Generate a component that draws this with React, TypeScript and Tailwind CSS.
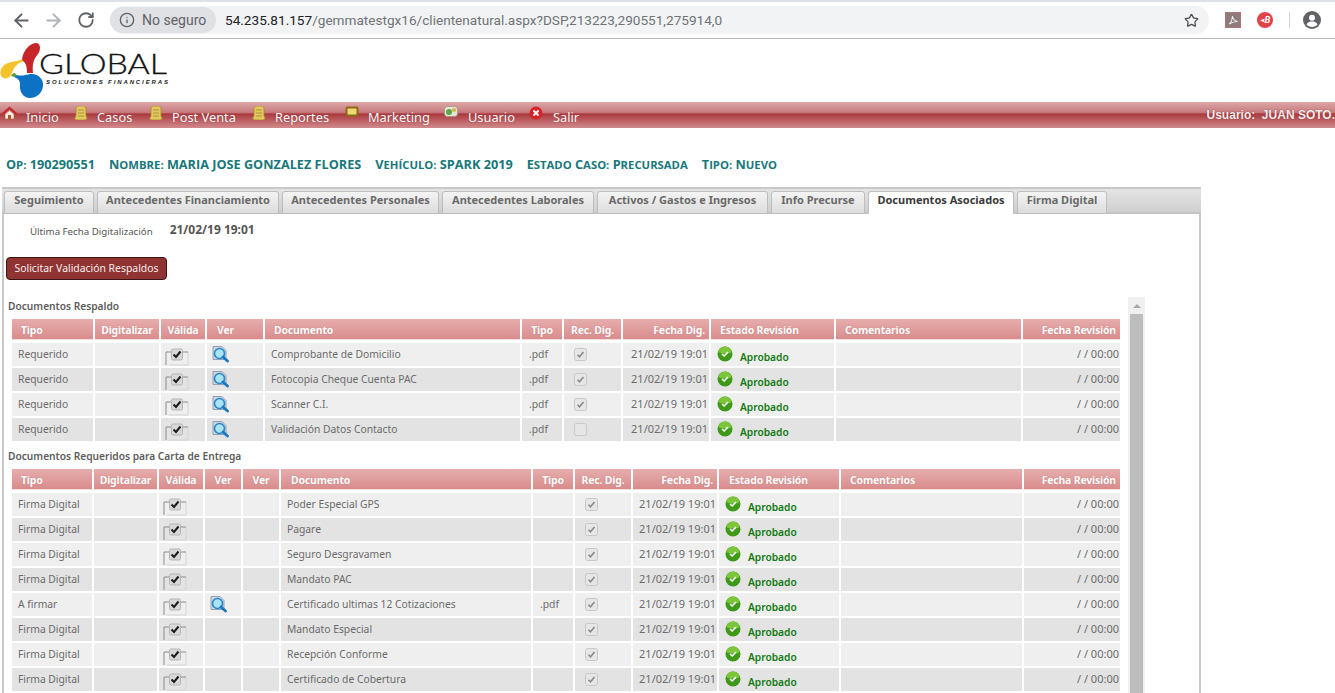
import React from 'react';
import { ArrowLeft, ArrowRight, RotateCw, Info, Star } from 'lucide-react';

const bodyFont = "font-['Noto_Sans','Open_Sans',sans-serif]";

const LogoMark = () => (
  <svg width="170" height="62" viewBox="0 39 170 62" className="block">
    <path d="M25 57L25 60C18 61 14 66 12 72C10 78 4 79 1 75C-1 70 2 64 8 62C14 60 20 60 25 57z" fill="#f4c32c" />
    <path d="M36 42C41 42 41 49 38 53C34 58 32 62 33 72L27 72C27 66 26 62 23 60C20 57 27 42 36 42z" fill="#c6262a" />
    <path d="M14 73C20 76 26 74 30 73C38 72 44 78 43 85C42 93 36 97 30 97C23 97 19 90 20 83C20 79 17 77 14 76z" fill="#0d71c4" />
    <path d="M11 75c1-2 2-3 4-3l2 3c-2 1-4 1-6 0z" fill="#5a9e3c" />
    <text x="39" y="73" textLength="128" lengthAdjust="spacingAndGlyphs" fontFamily="Lato, sans-serif" fontWeight="300" fontSize="27" fill="#111" stroke="#111" strokeWidth="0.3">GLOBAL</text>
    <text x="46" y="83" textLength="122" fontFamily="Liberation Sans, sans-serif" fontWeight="700" fontStyle="italic" fontSize="6" fill="#222">SOLUCIONES  FINANCIERAS</text>
  </svg>
);

const NoteIcon = () => (
  <svg width="14" height="14" viewBox="0 0 14 14">
    <path d="M2 3c0-2 1-3 3-3h5c1 0 2 1 2 3v7l1 2c0 1-1 2-2 2H3c-1 0-3-1-2-2l1-2z" fill="#e2c765" stroke="#a8891f" strokeWidth="0.8" />
    <path d="M4 4h6M4 7h6M4 10h6" stroke="#a8891f" strokeWidth="0.8" />
  </svg>
);

const HomeIcon = () => (
  <svg width="15" height="14" viewBox="0 0 15 14">
    <path d="M7.5 0.5 15 7l-1.5 1.5L7.5 3.5 1.5 8.5 0 7z" fill="#c8282a" />
    <path d="M3 8l4.500-3.500L12 8v5H3z" fill="#f6ece2" stroke="#9a5a3a" strokeWidth="0.6" />
    <rect x="6" y="9" width="3" height="4" fill="#b5552f" />
  </svg>
);

const MailIcon = () => (
  <svg width="14" height="12" viewBox="0 0 14 12">
    <rect x="0.500" y="0.500" width="13" height="10" rx="2" fill="#8f6a12" />
    <rect x="2.500" y="2.500" width="9" height="6" rx="1" fill="#f0d878" />
  </svg>
);

const UserMenuIcon = () => (
  <svg width="14" height="13" viewBox="0 0 14 13">
    <rect x="0.500" y="0.500" width="13" height="10" rx="3" fill="#e6e6d8" stroke="#9a9a80" strokeWidth="0.8" />
    <circle cx="5" cy="6" r="3" fill="#5aa845" />
    <circle cx="10" cy="4" r="2" fill="#d9b24a" />
  </svg>
);

const ExitIcon = () => (
  <svg width="14" height="14" viewBox="0 0 14 14">
    <circle cx="7" cy="7" r="6.500" fill="#d3242a" />
    <path d="M4.500 4.500l5 5M9.500 4.500l-5 5" stroke="#fff" strokeWidth="1.800" />
  </svg>
);

const ValidaBox = () => (
  <svg width="24" height="18" viewBox="0 0 24 18" className="block">
    <path d="M23 4v13H4" fill="none" stroke="#d4d4d4" strokeWidth="1" />
    <path d="M1 17V4h5M18 4h5" fill="none" stroke="#8c8c8c" strokeWidth="1" />
    <rect x="6.500" y="1" width="11" height="11" rx="1.500" fill="#d8d8d8" stroke="#b5b5b5" />
    <path d="M8.500 6.500l2.500 2.500 4.500-5.500" fill="none" stroke="#1c1c1c" strokeWidth="2" />
  </svg>
);

const Lupa = () => (
  <svg width="17" height="17" viewBox="0 0 17 17" className="block">
    <path d="M1 0.500h9l4 4v9H1z" fill="#ccd5df" stroke="#7f93a8" strokeWidth="0.8" />
    <circle cx="7.500" cy="7.500" r="5" fill="#a8e4f5" stroke="#2a86c8" strokeWidth="1.600" />
    <path d="M11 11l4.500 4" stroke="#1a78c0" strokeWidth="2.800" strokeLinecap="round" />
  </svg>
);

const RecBox = ({ checked }: { checked: boolean }) => (
  <svg width="13" height="13" viewBox="0 0 13 13" className="block">
    <rect x="0.500" y="0.500" width="12" height="12" rx="2" fill="#e6e6e6" stroke="#c8c8c8" />
    {checked && <path d="M3.500 6.800l2 2 4-4.800" fill="none" stroke="#8a8a8a" strokeWidth="1.600" />}
  </svg>
);

const OkIcon = () => (
  <svg width="16" height="16" viewBox="0 0 16 16" className="block">
    <circle cx="8" cy="8" r="7.500" fill="#3f9a1a" />
    <path d="M1.500 6a6.500 5.500 0 0 1 13 0c-2 2-11 2-13 0z" fill="#7cc63a" />
    <path d="M5 8l2.200 2L11 6" fill="none" stroke="#fff" strokeWidth="1.600" />
  </svg>
);

const menuItems = [
  { label: 'Inicio', icon: <HomeIcon />, box: 'w-[72px]', gap: 'ml-[9px]' },
  { label: 'Casos', icon: <NoteIcon />, box: 'w-[75px]', gap: 'ml-[9px]' },
  { label: 'Post Venta', icon: <NoteIcon />, box: 'w-[103px]', gap: 'ml-[9px]' },
  { label: 'Reportes', icon: <NoteIcon />, box: 'w-[93px]', gap: 'ml-[9px]' },
  { label: 'Marketing', icon: <MailIcon />, box: 'w-[99px]', gap: 'ml-[9px]' },
  { label: 'Usuario', icon: <UserMenuIcon />, box: 'w-[85px]', gap: 'ml-[10px]' },
  { label: 'Salir', icon: <ExitIcon />, box: 'w-[60px]', gap: 'ml-[10px]' },
];

const tabs = [
  { label: 'Seguimiento', box: 'w-[90px]' },
  { label: 'Antecedentes Financiamiento', box: 'w-[182px]' },
  { label: 'Antecedentes Personales', box: 'w-[157px]' },
  { label: 'Antecedentes Laborales', box: 'w-[152px]' },
  { label: 'Activos / Gastos e Ingresos', box: 'w-[171px]' },
  { label: 'Info Precurse', box: 'w-[94px]' },
  { label: 'Documentos Asociados', box: 'w-[146px]', active: true },
  { label: 'Firma Digital', box: 'w-[90px]' },
];

const gridOne = 'grid grid-cols-[81px_64px_44px_56px_255px_40px_57px_86px_123px_185px_97px] gap-x-[2px]';
const gridTwo = 'grid grid-cols-[80px_63px_44px_36px_36px_250px_40px_56px_84px_120px_181px_96px] gap-x-[2px]';

const headCell = "h-[21px] pt-[2px] flex items-center bg-gradient-to-b from-[#e6adad] to-[#d98c8c] border-b border-[#f3dede] text-white font-bold text-[10.500px] tracking-[-0.2px] [text-shadow:0_0_1px_#b87070]";

const HeadRow = ({ grid, labels }: { grid: string; labels: { t: string; cls: string }[] }) => (
  <div className={grid}>
    {labels.map((l, i) => (
      <div key={i} className={`${headCell} ${l.cls}`}>{l.t}</div>
    ))}
  </div>
);

// versalitas: primera letra grande, el resto algo más chico
const Caps = ({ text }: { text: string }) => (
  <span>
    {text.split(' ').map((w, i) => (
      <span key={i}>
        {i > 0 && ' '}
        {w[0]}
        <span className="text-[11.300px]">{w.slice(1)}</span>
      </span>
    ))}
  </span>
);

const respaldo = [
  { doc: 'Comprobante de Domicilio', rec: true },
  { doc: 'Fotocopia Cheque Cuenta PAC', rec: true },
  { doc: 'Scanner C.I.', rec: true },
  { doc: 'Validación Datos Contacto', rec: false },
];

const requeridos = [
  { tipo: 'Firma Digital', doc: 'Poder Especial GPS' },
  { tipo: 'Firma Digital', doc: 'Pagare' },
  { tipo: 'Firma Digital', doc: 'Seguro Desgravamen' },
  { tipo: 'Firma Digital', doc: 'Mandato PAC' },
  { tipo: 'A firmar', doc: 'Certificado ultimas 12 Cotizaciones', pdf: true },
  { tipo: 'Firma Digital', doc: 'Mandato Especial' },
  { tipo: 'Firma Digital', doc: 'Recepción Conforme' },
  { tipo: 'Firma Digital', doc: 'Certificado de Cobertura' },
];

const Estado = ({ pad }: { pad: string }) => (
  <div className={`flex items-start pt-[3px] h-full ${pad}`}>
    <OkIcon />
    <span className="ml-[7px] mt-[4px] text-[10.200px] leading-[14px] font-semibold text-[#117a11]">Aprobado</span>
  </div>
);

const App = () => {
  return (
    <div className={`w-[1335px] h-[693px] overflow-hidden bg-white ${bodyFont}`}>
      {/* barra del navegador */}
      <div className="h-[39px] bg-white border-t-2 border-[#dee1e6] border-b border-b-[#b8b8b8] flex items-center font-['Roboto',sans-serif]">
        <ArrowLeft size={21} className="ml-[11px] text-[#5f6368]" strokeWidth={2.2} />
        <ArrowRight size={21} className="ml-[11px] text-[#b0b3b8]" strokeWidth={2.2} />
        <RotateCw size={18} className="ml-[13px] text-[#5f6368]" strokeWidth={2.4} />
        <div className="ml-[15px] w-[1099px] h-[28px] rounded-full bg-[#f1f3f4] flex items-center">
          <div className="w-[106px] h-[26px] rounded-full bg-[#dfe1e5] flex items-center">
            <Info size={16} className="ml-[9px] text-[#5f6368]" />
            <span className="ml-[7px] text-[14px] text-[#5f6368]">No seguro</span>
          </div>
          <span className="ml-[9px] text-[13.600px] text-[#202124] whitespace-nowrap">
            54.235.81.157<span className="text-[#6f7377]">/gemmatestgx16/clientenatural.aspx?DSP,213223,290551,275914,0</span>
          </span>
          <Star size={15} className="ml-auto mr-[10px] text-[#4a4d52]" strokeWidth={2} />
        </div>
        <div className="ml-[16px] w-[16px] h-[16px] bg-[#8e7c7c] border border-[#a77] flex items-center justify-center">
          <svg width="12" height="12" viewBox="0 0 12 12"><path d="M2 10c2-1 3-4 3.500-8 .5 3 2 5 5 5.500-3 0-6 1-8.500 2.500z" fill="none" stroke="#eee" strokeWidth="1.100" /></svg>
        </div>
        <div className="ml-[16px] w-[16px] h-[16px] rounded-full bg-[#e2434b] flex items-center justify-center text-white text-[9px] font-bold italic leading-none">
          <svg width="5" height="5" viewBox="0 0 5 5"><path d="M0 2.500 5 0.500 4 2.500 5 4.500z" fill="#fff" /></svg>
          <span>B</span>
        </div>
        <div className="ml-[16px] w-px h-[16px] bg-[#d5d5d5]" />
        <svg width="18" height="18" viewBox="0 0 18 18" className="ml-[13px]">
          <circle cx="9" cy="9" r="9" fill="#5f6368" />
          <circle cx="9" cy="6.800" r="3" fill="#fff" />
          <path d="M3.500 13.500c1-2.500 3.500-3 5.500-3s4.500.5 5.500 3c-1.200 1.500-3.300 2.500-5.500 2.500s-4.300-1-5.500-2.500z" fill="#fff" />
        </svg>
      </div>

      {/* logo */}
      <div className="h-[63px] pt-px">
        <LogoMark />
      </div>

      {/* menu */}
      <div className="h-[26px] bg-[linear-gradient(to_bottom,#dca8a8_0%,#c87a7e_40%,#a93a3e_46%,#b9565a_65%,#d18a8d_100%)] flex items-start text-white text-[12.800px] [text-shadow:0_0_1px_#7a2226]">
        {menuItems.map((m) => (
          <div key={m.label} className={`${m.box} flex items-start pl-[2px] pt-[4px]`}>
            <span className="shrink-0">{m.icon}</span>
            <span className={`${m.gap} mt-[2px] leading-[18px] whitespace-nowrap`}>{m.label}</span>
          </div>
        ))}
        <div className="ml-auto font-['Liberation_Sans',sans-serif] font-bold text-[12px] leading-[16px] pt-[5px] text-[#f8eeee]">Usuario:&nbsp; JUAN SOTO.</div>
      </div>

      {/* datos del caso */}
      <div className="h-[59px] pl-[6px] pt-[27px] flex gap-[14px] font-bold text-[#17787a] text-[12.700px] leading-[18px] font-['Open_Sans',sans-serif] whitespace-nowrap">
        <span><Caps text="OP:" /> 190290551</span>
        <span><Caps text="NOMBRE:" /> MARIA JOSE GONZALEZ FLORES</span>
        <span><Caps text="VEHÍCULO:" /> SPARK 2019</span>
        <span><Caps text="ESTADO CASO: PRECURSADA" /></span>
        <span><Caps text="TIPO: NUEVO" /></span>
      </div>

      {/* pestañas */}
      <div className="ml-[2px] w-[1199px] border-x-2 border-[#c8c8c8] h-[507px]">
        <div className="h-[27px] bg-gradient-to-b from-[#e4e4e4] to-[#cfcfcf] border-t-2 border-[#c8c8c8] -mx-[2px] pl-[2px] flex items-end border-b-2 border-b-[#c4c4c4]">
          <div className="flex gap-[3px] -mb-[2px]">
            {tabs.map((t) => (
              <div
                key={t.label}
                className={`${t.box} h-[23px] pb-[4px] rounded-t-[3px] border border-[#bdbdbd] flex items-center justify-center whitespace-nowrap font-bold text-[11px] ${
                  t.active ? 'bg-white border-b-white text-[#3a3a3a]' : 'bg-gradient-to-b from-[#f4f4f4] to-[#dcdcdc] text-[#6a6a6a]'
                }`}
              >
                {t.label}
              </div>
            ))}
          </div>
        </div>

        <div className="flex">
          <div className="w-[1124px] shrink-0 pl-[2px]">
            <div className="h-[43px] flex pt-[8px] items-start">
              <span className="ml-[24px] mt-[3px] text-[9.700px] leading-[14px] text-[#555]">Última Fecha Digitalización</span>
              <span className="ml-[17px] mt-px text-[12px] leading-[14px] font-bold text-[#555]">21/02/19 19:01</span>
            </div>
            <button className="block w-[161px] h-[23px] rounded-[4px] bg-[#8f3333] border border-[#3a1414] text-[#f7eeee] text-[10.400px] leading-none">
              Solicitar Validación Respaldos
            </button>
            <div className="mt-[18px] h-[21px] pl-[2px] text-[10.200px] leading-[16px] font-semibold text-[#5d5d5d]">Documentos Respaldo</div>

            <div className="pl-[6px] text-[10.300px] text-[#6b6b6b] leading-none">
              <HeadRow
                grid={gridOne}
                labels={[
                  { t: 'Tipo', cls: 'pl-[9px]' },
                  { t: 'Digitalizar', cls: 'justify-center' },
                  { t: 'Válida', cls: 'justify-center' },
                  { t: 'Ver', cls: 'pl-[10px]' },
                  { t: 'Documento', cls: 'pl-[9px]' },
                  { t: 'Tipo', cls: 'justify-center' },
                  { t: 'Rec. Dig.', cls: 'justify-center' },
                  { t: 'Fecha Dig.', cls: 'justify-end pr-[4px]' },
                  { t: 'Estado Revisión', cls: 'pl-[9px]' },
                  { t: 'Comentarios', cls: 'pl-[9px]' },
                  { t: 'Fecha Revisión', cls: 'justify-end pr-[4px]' },
                ]}
              />
              <div className="mt-[3px] flex flex-col gap-[2px]">
                {respaldo.map((r, i) => {
                  const bg = i % 2 === 0 ? 'bg-[#efefef]' : 'bg-[#e3e3e3]';
                  const cell = `${bg} h-[23px] flex items-center`;
                  return (
                    <div key={r.doc} className={gridOne}>
                      <div className={`${cell} pl-[6px]`}>Requerido</div>
                      <div className={cell} />
                      <div className={`${cell} pl-[4px] pt-[4px]`}><ValidaBox /></div>
                      <div className={`${cell} pl-[5px]`}><Lupa /></div>
                      <div className={`${cell} pl-[6px]`}>{r.doc}</div>
                      <div className={`${cell} pl-[7px]`}>.pdf</div>
                      <div className={`${cell} pl-[10px]`}><RecBox checked={r.rec} /></div>
                      <div className={`${cell} justify-end pr-[1px] pb-[2px] whitespace-nowrap text-[11px]`}>21/02/19 19:01</div>
                      <div className={bg}><Estado pad="pl-[6px]" /></div>
                      <div className={cell} />
                      <div className={`${cell} justify-end pr-[1px] pb-[2px] text-[11px]`}>/ / 00:00</div>
                    </div>
                  );
                })}
              </div>

              <div className="-ml-[4px] mt-[7px] h-[21px] text-[10.200px] leading-[16px] font-semibold text-[#5d5d5d]">Documentos Requeridos para Carta de Entrega</div>

              <HeadRow
                grid={gridTwo}
                labels={[
                  { t: 'Tipo', cls: 'pl-[9px]' },
                  { t: 'Digitalizar', cls: 'justify-center' },
                  { t: 'Válida', cls: 'justify-center' },
                  { t: 'Ver', cls: 'justify-center' },
                  { t: 'Ver', cls: 'justify-center' },
                  { t: 'Documento', cls: 'pl-[10px]' },
                  { t: 'Tipo', cls: 'justify-center' },
                  { t: 'Rec. Dig.', cls: 'justify-center' },
                  { t: 'Fecha Dig.', cls: 'justify-end pr-[4px]' },
                  { t: 'Estado Revisión', cls: 'pl-[10px]' },
                  { t: 'Comentarios', cls: 'pl-[9px]' },
                  { t: 'Fecha Revisión', cls: 'justify-end pr-[4px]' },
                ]}
              />
              <div className="mt-[3px] flex flex-col gap-[2px]">
                {requeridos.map((r, i) => {
                  const bg = i % 2 === 0 ? 'bg-[#efefef]' : 'bg-[#e3e3e3]';
                  const cell = `${bg} h-[23px] flex items-center`;
                  return (
                    <div key={r.doc} className={gridTwo}>
                      <div className={`${cell} pl-[6px]`}>{r.tipo}</div>
                      <div className={cell} />
                      <div className={`${cell} pl-[4px] pt-[4px]`}><ValidaBox /></div>
                      <div className={`${cell} pl-[5px]`}>{r.pdf && <Lupa />}</div>
                      <div className={cell} />
                      <div className={`${cell} pl-[6px]`}>{r.doc}</div>
                      <div className={`${cell} pl-[7px]`}>{r.pdf && '.pdf'}</div>
                      <div className={`${cell} pl-[10px]`}><RecBox checked /></div>
                      <div className={`${cell} justify-end pr-[1px] pb-[2px] whitespace-nowrap text-[11px]`}>21/02/19 19:01</div>
                      <div className={bg}><Estado pad="pl-[6px]" /></div>
                      <div className={cell} />
                      <div className={`${cell} justify-end pr-[1px] pb-[2px] text-[11px]`}>/ / 00:00</div>
                    </div>
                  );
                })}
              </div>
            </div>
          </div>

          {/* barra de scroll */}
          <div className="w-[17px] mt-[83px] bg-[#f0f0f0] h-[400px] shrink-0 flex flex-col items-center">
            <div className="h-[17px] flex items-center justify-center">
              <div className="w-0 h-0 border-x-[4px] border-x-transparent border-b-[4px] border-b-[#a8a8a8]" />
            </div>
            <div className="w-[13px] flex-1 bg-[#bdbdbd]" />
          </div>
        </div>
      </div>
    </div>
  );
};

export default App;
